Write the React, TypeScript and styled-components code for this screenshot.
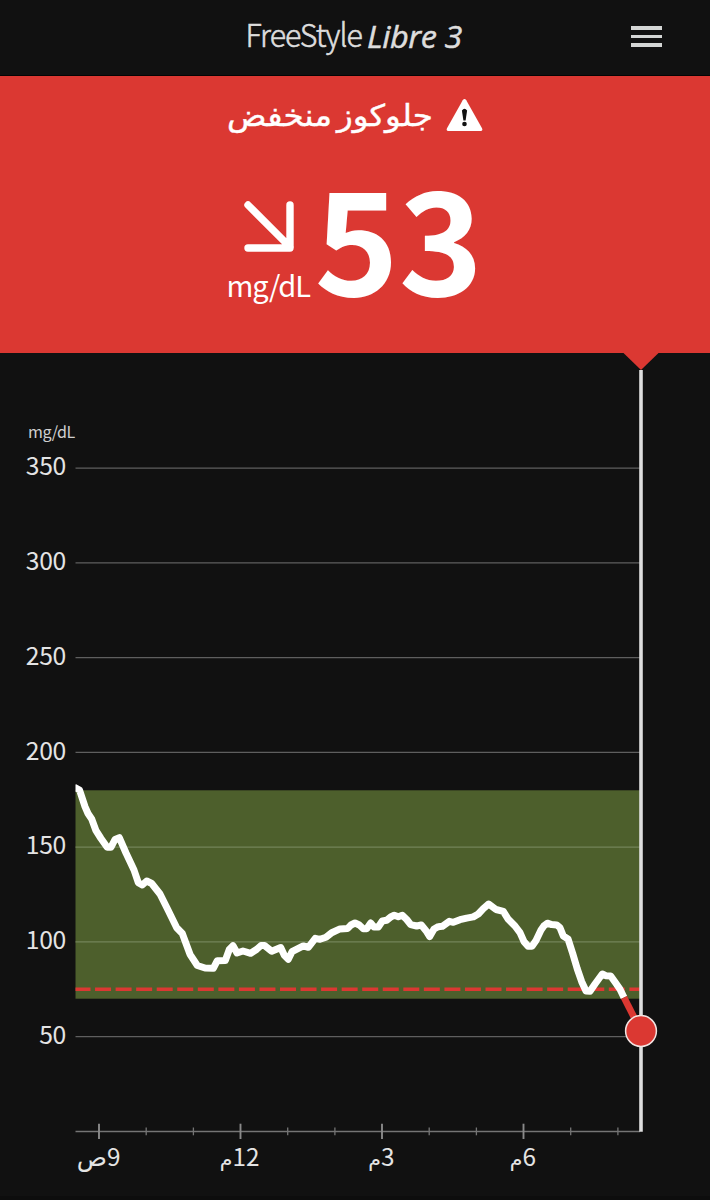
import React from "react";
import styled, { createGlobalStyle } from "styled-components";

const GlobalStyle = createGlobalStyle`
  * { box-sizing: border-box; }
  body { margin: 0; background: #111111; }
`;

const colors = {
  background: "#111111",
  alert: "#db3832",
  range: "#4d5f2c",
  text: "#e4e4e4",
  grid: "#5f5f5f",
};

const sans = `"Noto Sans CJK SC", "Noto Sans", sans-serif`;

const Screen = styled.main`
  width: 710px;
  height: 1200px;
  display: flex;
  flex-direction: column;
  overflow: hidden;
  background: ${colors.background};
  color: ${colors.text};
  font-family: ${sans};
`;

const Header = styled.header`
  height: 76px;
  flex: none;
  display: grid;
  grid-template-columns: 1fr 216px 1fr;
  align-items: center;
  padding: 0 48px 2px;
  border-bottom: 1px solid #050505;
`;

const Logo = styled.svg`
  grid-column: 2;
  width: 216px;
  height: 50px;
  overflow: visible;
`;

const MenuButton = styled.button`
  justify-self: end;
  width: 31px;
  padding: 0;
  border: 0;
  background: none;
  display: flex;
  flex-direction: column;
  gap: 5px;
`;

const MenuBar = styled.span`
  height: 3.6px;
  background: #d4d6d5;
`;

const AlertPanel = styled.section`
  height: 277px;
  flex: none;
  background: ${colors.alert};
  color: #fff;
  display: flex;
  flex-direction: column;
  align-items: center;
`;

const AlertTitle = styled.div`
  height: 78px;
  width: 256px;
  display: flex;
  justify-content: space-between;
  align-items: center;
`;

const TitleText = styled.svg`
  width: 206px;
  height: 60px;
  overflow: visible;
`;

const WarningIcon = styled.svg`
  width: 37px;
  height: 34px;
`;

const Reading = styled.div`
  display: flex;
  width: 254px;
  height: 170px;
`;

const TrendColumn = styled.div`
  width: 86.5px;
  flex: none;
  padding-top: 44px;
  display: flex;
  flex-direction: column;
`;

const TrendArrow = styled.svg`
  width: 56px;
  height: 56px;
  margin-left: 13px;
`;

const Unit = styled.span`
  font-size: 29px;
  line-height: 36px;
  margin-top: 12px;
  margin-left: -1.5px;
  letter-spacing: -1.1px;
  white-space: nowrap;
`;

const Value = styled.span`
  font-size: 143px;
  font-weight: 700;
  line-height: 160px;
  white-space: nowrap;
`;

const Chart = styled.svg`
  display: block;
  flex: none;
  width: 710px;
  height: 847px;
  font-family: ${sans};
`;

const GRID_LEVELS = [350, 300, 250, 200, 150, 100, 50];
const levelY = (level: number) => 1131.3 - level * 1.895;

const HOURS = [
  { n: "9", suffix: "ص", x: 99, right: 120.5 },
  { n: "12", suffix: "م", x: 240.5, right: 259.5 },
  { n: "3", suffix: "م", x: 382, right: 394.5 },
  { n: "6", suffix: "م", x: 523.5, right: 536 },
];
const MINOR_TICKS = [146.2, 193.4, 287.7, 334.9, 429.2, 476.4, 570.7, 617.9];

const TRACE: [number, number][] = [
  [74, 787], [79.5, 790], [85, 806.7], [88, 813.5], [91.7, 819], [96, 830.7], [101, 838.5],
  [107.2, 847.2], [111, 847.2], [115, 839.5], [119.3, 837.7], [126, 853], [134, 870],
  [138.3, 882.7], [142.3, 885], [146.7, 881], [151.7, 883.5], [160, 894], [168, 910],
  [176.7, 927.7], [182.3, 933.5], [190, 954.3], [197.3, 965.5], [205, 968], [213.3, 968.3],
  [217.3, 960.7], [225.3, 960.5], [229.3, 949.5], [233, 945.7], [237, 953], [243, 951],
  [250.7, 953.3], [256.5, 949.5], [261, 945.5], [264.5, 945.5], [271.7, 951.3], [280.7, 947.5],
  [284.3, 955.3], [288.3, 959.3], [292, 951.7], [303.3, 945.9], [308.3, 947.3], [315.3, 938.3],
  [320, 939.3], [326, 937.3], [331.7, 932.7], [340, 928.9], [347.7, 928.4], [351, 925],
  [355, 923], [359.3, 925], [363.3, 928.7], [366.7, 928.7], [370.7, 923], [374, 927],
  [378.3, 927], [382.3, 921], [386.7, 920.3], [390.7, 917], [394.3, 915.2], [398.3, 916.7],
  [402.3, 915.2], [406.7, 919.5], [410.7, 924.7], [416.7, 926], [421.3, 925], [426, 930.7],
  [429.7, 936.5], [434, 929], [438.3, 926.7], [442.3, 926.3], [449.3, 921.3], [453.3, 922.3],
  [460, 919.7], [466.7, 918.1], [473.3, 916.9], [478.3, 914], [483.3, 908.6], [488.7, 904],
  [496, 909.5], [503.3, 911.3], [508.3, 919.3], [515, 926], [520, 932.7], [524, 941.7],
  [528, 946.2], [532, 946.2], [536, 940.5], [541, 930], [544, 925.7], [547.3, 923.2],
  [551.7, 924.6], [556.7, 924.9], [560, 927.7], [563.3, 936], [568, 938.9], [572.7, 953.5],
  [577.3, 969], [581.7, 981.7], [586, 991], [590, 991.2], [595, 984], [602.3, 974],
  [605.7, 975.7], [610.7, 976], [615.7, 983], [620, 989.3], [624, 997.5],
];

function Glucose() {
  return (
    <Chart viewBox="0 353 710 847">
      <defs>
        <clipPath id="plot">
          <rect x="75.5" y="770" width="566" height="362" />
        </clipPath>
      </defs>
      <rect x="75.5" y="790.3" width="565" height="208.4" fill={colors.range} />
      {GRID_LEVELS.map((level) => (
        <g key={level}>
          <line
            x1="75.5"
            x2="640"
            y1={levelY(level)}
            y2={levelY(level)}
            stroke={level === 150 || level === 100 ? "#738358" : colors.grid}
            strokeWidth="1.2"
          />
          <text
            x="66.3"
            y={levelY(level) + 7.4}
            fontSize="24.7"
            textAnchor="end"
            textLength={level < 100 ? 27 : 40.5}
            fill={colors.text}
          >
            {level}
          </text>
        </g>
      ))}
      <text x="28" y="438.3" fontSize="16.1" textLength="47.3" fill="#cfcfcf">
        mg/dL
      </text>

      <line x1="75.5" x2="640" y1="1131.5" y2="1131.5" stroke="#757575" strokeWidth="1.4" />
      {MINOR_TICKS.map((x) => (
        <line key={x} x1={x} x2={x} y1="1127.5" y2="1135.3" stroke="#757575" strokeWidth="1.3" />
      ))}
      {HOURS.map((h) => (
        <g key={h.x} fill={colors.text}>
          <line x1={h.x} x2={h.x} y1="1123.7" y2="1139" stroke="#8a8a8a" strokeWidth="1.9" />
          <text x={h.right} y="1166" fontSize="24.3" direction="rtl">
            {h.n}
            <tspan
              fontFamily="'DejaVu Sans', sans-serif"
              fontSize={h.suffix === "م" ? 20.5 : 25}
            >
              {h.suffix}
            </tspan>
          </text>
        </g>
      ))}

      <line
        x1="75.5"
        x2="640"
        y1="989.3"
        y2="989.3"
        stroke={colors.alert}
        strokeWidth="3.4"
        strokeDasharray="16 4.55"
        strokeDashoffset="1"
      />
      <polyline
        clipPath="url(#plot)"
        points={TRACE.map((p) => p.join(",")).join(" ")}
        fill="none"
        stroke="#fff"
        strokeWidth="7"
        strokeLinejoin="round"
      />
      <line x1="641" x2="641" y1="370" y2="1131.8" stroke="#dedede" strokeWidth="3.6" />
      <path d="M623.5 353H658.5L641 370Z" fill={colors.alert} />
      <line x1="624" y1="997.5" x2="641" y2="1031" stroke={colors.alert} strokeWidth="6.8" />
      <circle cx="641" cy="1031" r="15.4" fill={colors.alert} stroke="#f2e4e2" strokeWidth="1.5" />
      <rect x="0" y="1196" width="710" height="4" fill="#0d0d0d" />
    </Chart>
  );
}

export default function App() {
  return (
    <Screen>
      <GlobalStyle />
      <Header>
        <Logo viewBox="0 0 216 50">
          <text
            x="-1.5"
            y="35"
            fontSize="32"
            fontWeight="300"
            letterSpacing="-1"
            textLength="116.5"
            lengthAdjust="spacingAndGlyphs"
            fill="#dddddd"
            stroke="#dddddd"
            strokeWidth="0.6"
          >
            FreeStyle
          </text>
          <text
            x="120"
            y="35.5"
            fontFamily="'Open Sans', 'Noto Sans', sans-serif"
            fontSize="31"
            fontStyle="italic"
            fontWeight="500"
            letterSpacing="-0.4"
            textLength="95"
            lengthAdjust="spacingAndGlyphs"
            fill="#dddddd"
            stroke="#dddddd"
            strokeWidth="0.5"
          >
            Libre 3
          </text>
        </Logo>
        <MenuButton aria-label="Menu">
          <MenuBar />
          <MenuBar />
          <MenuBar />
        </MenuButton>
      </Header>
      <AlertPanel>
        <AlertTitle>
          <TitleText viewBox="0 0 206 60">
            <text
              x="0"
              y="41"
              fontFamily="'DejaVu Sans', sans-serif"
              fontSize="30"
              wordSpacing="-5"
              textLength="206"
              lengthAdjust="spacingAndGlyphs"
              fill="#fff"
              stroke="#fff"
              strokeWidth="0.4"
            >
              جلوكوز منخفض
            </text>
          </TitleText>
          <WarningIcon viewBox="0 0 37 34">
            <path
              d="M16.7 2.2Q18.5-.4 20.3 2.2L36 30.2Q37.2 33 34.4 33H2.6Q-.2 33 1 30.2Z"
              fill="#fff"
            />
            <path d="M15.9 12.5Q18.5 9 21.1 12.5L19.6 22.5H17.4Z" fill="#111" />
            <circle cx="18.5" cy="26" r="2.3" fill="#111" />
          </WarningIcon>
        </AlertTitle>
        <Reading>
          <TrendColumn>
            <TrendArrow viewBox="0 0 56 56" fill="none" stroke="#fff" strokeWidth="7.4">
              <path d="M7 7L49 49M49 7V50H7" strokeLinecap="round" strokeLinejoin="round" />
            </TrendArrow>
            <Unit>mg/dL</Unit>
          </TrendColumn>
          <Value>53</Value>
        </Reading>
      </AlertPanel>
      <Glucose />
    </Screen>
  );
}
